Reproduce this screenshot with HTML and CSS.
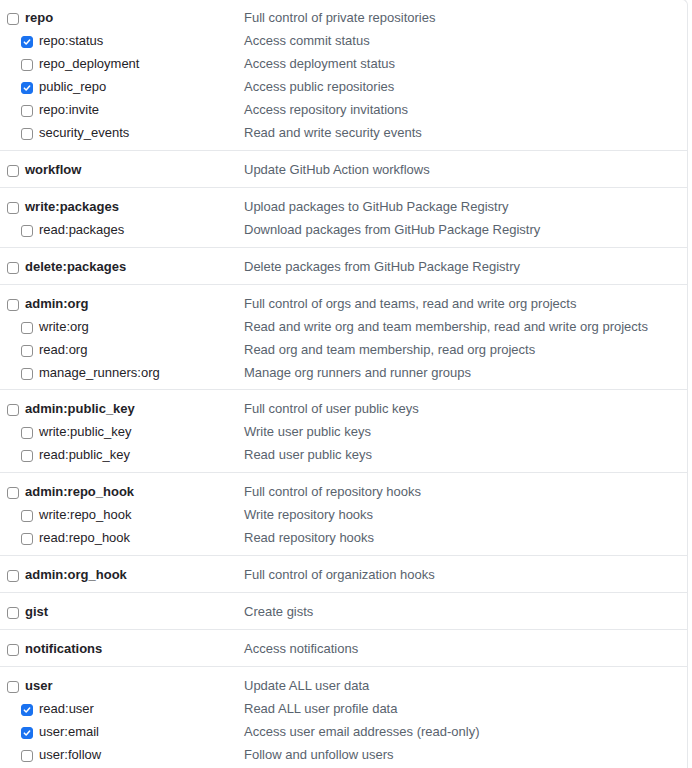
FILE: index.html
```html
<!DOCTYPE html>
<html>
<head>
<meta charset="utf-8">
<link rel="stylesheet" href="styles.css">
</head>
<body>
<div class="scopes">
  <div class="group">
    <div class="row top"><label class="name"><span class="cb"></span>repo</label><span class="desc">Full control of private repositories</span></div>
    <div class="row sub"><label class="name"><span class="cb on"><svg viewBox="0 0 12 12"><path d="M2.8 6.2 L5 8.4 L9.2 3.6"/></svg></span>repo:status</label><span class="desc">Access commit status</span></div>
    <div class="row sub"><label class="name"><span class="cb"></span>repo_deployment</label><span class="desc">Access deployment status</span></div>
    <div class="row sub"><label class="name"><span class="cb on"><svg viewBox="0 0 12 12"><path d="M2.8 6.2 L5 8.4 L9.2 3.6"/></svg></span>public_repo</label><span class="desc">Access public repositories</span></div>
    <div class="row sub"><label class="name"><span class="cb"></span>repo:invite</label><span class="desc">Access repository invitations</span></div>
    <div class="row sub"><label class="name"><span class="cb"></span>security_events</label><span class="desc">Read and write security events</span></div>
  </div>
  <div class="group">
    <div class="row top"><label class="name"><span class="cb"></span>workflow</label><span class="desc">Update GitHub Action workflows</span></div>
  </div>
  <div class="group">
    <div class="row top"><label class="name"><span class="cb"></span>write:packages</label><span class="desc">Upload packages to GitHub Package Registry</span></div>
    <div class="row sub"><label class="name"><span class="cb"></span>read:packages</label><span class="desc">Download packages from GitHub Package Registry</span></div>
  </div>
  <div class="group">
    <div class="row top"><label class="name"><span class="cb"></span>delete:packages</label><span class="desc">Delete packages from GitHub Package Registry</span></div>
  </div>
  <div class="group g4">
    <div class="row top"><label class="name"><span class="cb"></span>admin:org</label><span class="desc">Full control of orgs and teams, read and write org projects</span></div>
    <div class="row sub"><label class="name"><span class="cb"></span>write:org</label><span class="desc">Read and write org and team membership, read and write org projects</span></div>
    <div class="row sub"><label class="name"><span class="cb"></span>read:org</label><span class="desc">Read org and team membership, read org projects</span></div>
    <div class="row sub"><label class="name"><span class="cb"></span>manage_runners:org</label><span class="desc">Manage org runners and runner groups</span></div>
  </div>
  <div class="group">
    <div class="row top"><label class="name"><span class="cb"></span>admin:public_key</label><span class="desc">Full control of user public keys</span></div>
    <div class="row sub"><label class="name"><span class="cb"></span>write:public_key</label><span class="desc">Write user public keys</span></div>
    <div class="row sub"><label class="name"><span class="cb"></span>read:public_key</label><span class="desc">Read user public keys</span></div>
  </div>
  <div class="group">
    <div class="row top"><label class="name"><span class="cb"></span>admin:repo_hook</label><span class="desc">Full control of repository hooks</span></div>
    <div class="row sub"><label class="name"><span class="cb"></span>write:repo_hook</label><span class="desc">Write repository hooks</span></div>
    <div class="row sub"><label class="name"><span class="cb"></span>read:repo_hook</label><span class="desc">Read repository hooks</span></div>
  </div>
  <div class="group">
    <div class="row top"><label class="name"><span class="cb"></span>admin:org_hook</label><span class="desc">Full control of organization hooks</span></div>
  </div>
  <div class="group">
    <div class="row top"><label class="name"><span class="cb"></span>gist</label><span class="desc">Create gists</span></div>
  </div>
  <div class="group">
    <div class="row top"><label class="name"><span class="cb"></span>notifications</label><span class="desc">Access notifications</span></div>
  </div>
  <div class="group">
    <div class="row top"><label class="name"><span class="cb"></span>user</label><span class="desc">Update ALL user data</span></div>
    <div class="row sub"><label class="name"><span class="cb on"><svg viewBox="0 0 12 12"><path d="M2.8 6.2 L5 8.4 L9.2 3.6"/></svg></span>read:user</label><span class="desc">Read ALL user profile data</span></div>
    <div class="row sub"><label class="name"><span class="cb on"><svg viewBox="0 0 12 12"><path d="M2.8 6.2 L5 8.4 L9.2 3.6"/></svg></span>user:email</label><span class="desc">Access user email addresses (read-only)</span></div>
    <div class="row sub"><label class="name"><span class="cb"></span>user:follow</label><span class="desc">Follow and unfollow users</span></div>
  </div>
</div>
</body>
</html>
```
FILE: styles.css
```css
html, body {
  margin: 0;
  padding: 0;
  background: #ffffff;
}
body {
  font-family: "Liberation Sans", Arial, sans-serif;
  font-size: 13px;
  color: #1f2328;
  overflow: hidden;
  padding-top: 1px;
}
.scopes {
  width: 687px;
  margin-top: -2px;
  border-top: 1px solid #e6e8eb;
  border-right: 1px solid #e6e8eb;
  border-top-right-radius: 6px;
}
.group {
  padding: 7px 0 6px;
  border-top: 1px solid #e6e8eb;
}
.group:first-child {
  border-top: none;
  padding-top: 6px;
}
.group.g4 {
  padding-bottom: 5px;
}
.row {
  display: grid;
  grid-template-columns: 244px 1fr;
  height: 23px;
  align-items: center;
}
.name {
  display: flex;
  align-items: center;
  white-space: nowrap;
}
.top .name {
  padding-left: 7px;
  font-weight: bold;
}
.sub .name {
  padding-left: 21px;
}
.cb {
  box-sizing: border-box;
  width: 12px;
  height: 12px;
  margin-top: 3px;
  margin-right: 6px;
  border: 1px solid #8f8f8f;
  border-radius: 3px;
  background: #fff;
  display: flex;
  align-items: center;
  justify-content: center;
  flex: none;
}
.cb.on {
  background: #1a72f0;
  border-color: #1a72f0;
}
.cb svg {
  width: 12px;
  height: 12px;
  fill: none;
  stroke: #fff;
  stroke-width: 1.8;
  stroke-linecap: round;
  stroke-linejoin: round;
}
.desc {
  color: #59636e;
  white-space: nowrap;
}
```
